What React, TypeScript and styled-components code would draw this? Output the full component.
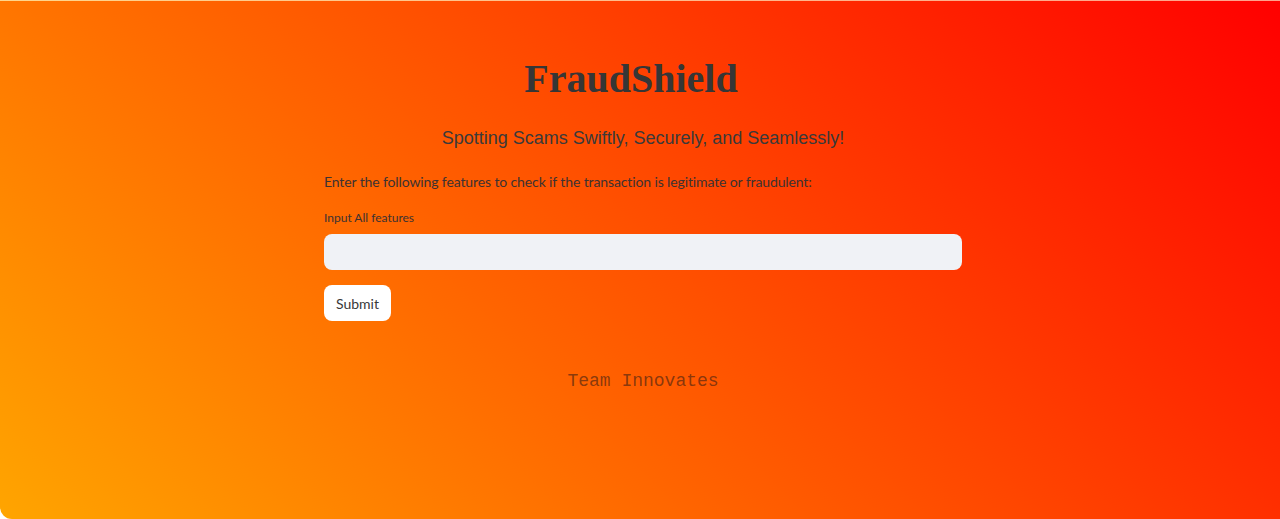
import React from "react";
import styled, { createGlobalStyle } from "styled-components";

const Global = createGlobalStyle`
  html, body { margin: 0; padding: 0; background: #ffffff; }
  body { font-family: "Lato", "Noto Sans", sans-serif; }
  * { box-sizing: border-box; }
`;

const Page = styled.div`
  height: 519px;
  border-top: 1px solid rgba(255, 255, 255, 0.55);
  border-bottom-left-radius: 12px;
  background: linear-gradient(45deg, #ffa500, #ff0000);
  display: flex;
  justify-content: center;
  padding-left: 6px;
  overflow: hidden;
`;

const Column = styled.main`
  width: 638px;
  display: flex;
  flex-direction: column;
  padding-top: 55px;
`;

const Title = styled.h1`
  margin: 0;
  padding-right: 24px;
  text-align: center;
  font-family: "Liberation Serif", "Times New Roman", serif;
  font-weight: 700;
  font-size: 40px;
  line-height: 46px;
  color: #363636;
`;

const Subtitle = styled.h3`
  margin: 24px 0 0;
  text-align: center;
  font-family: "Liberation Sans", Arial, sans-serif;
  font-weight: 400;
  font-size: 18px;
  line-height: 24px;
  color: #3a3a3a;
`;

const Intro = styled.p`
  margin: 22px 0 0;
  font-family: "Lato", "Noto Sans", sans-serif;
  font-size: 14px;
  letter-spacing: -0.12px;
  line-height: 20px;
  color: #3c3232;
`;

const Label = styled.label`
  display: block;
  margin-top: 18px;
  font-family: "Lato", "Noto Sans", sans-serif;
  font-size: 12px;
  line-height: 16px;
  color: #3c3232;
`;

const Field = styled.input`
  margin-top: 8px;
  width: 100%;
  height: 36px;
  border: none;
  border-radius: 8px;
  background: #f0f2f6;
  padding: 0 12px;
  outline: none;
  font-family: "Lato", "Noto Sans", sans-serif;
  font-size: 14px;
`;

const SubmitButton = styled.button`
  margin-top: 15px;
  align-self: flex-start;
  width: 67px;
  height: 36px;
  border: 1px solid rgba(255, 255, 255, 0.8);
  border-radius: 8px;
  background: #ffffff;
  font-family: "Lato", "Noto Sans", sans-serif;
  font-size: 14px;
  color: #383838;
  cursor: pointer;
`;

const Footer = styled.p`
  margin: 49px 0 0;
  text-align: center;
  font-family: "Liberation Mono", "Courier New", monospace;
  font-size: 18px;
  line-height: 22px;
  color: rgba(70, 35, 20, 0.65);
`;

export default function App() {
  return (
    <>
      <Global />
      <Page>
        <Column>
          <Title>FraudShield</Title>
          <Subtitle>Spotting Scams Swiftly, Securely, and Seamlessly!</Subtitle>
          <Intro>
            Enter the following features to check if the transaction is legitimate or fraudulent:
          </Intro>
          <Label htmlFor="features">Input All features</Label>
          <Field id="features" type="text" />
          <SubmitButton>Submit</SubmitButton>
          <Footer>Team Innovates</Footer>
        </Column>
      </Page>
    </>
  );
}
